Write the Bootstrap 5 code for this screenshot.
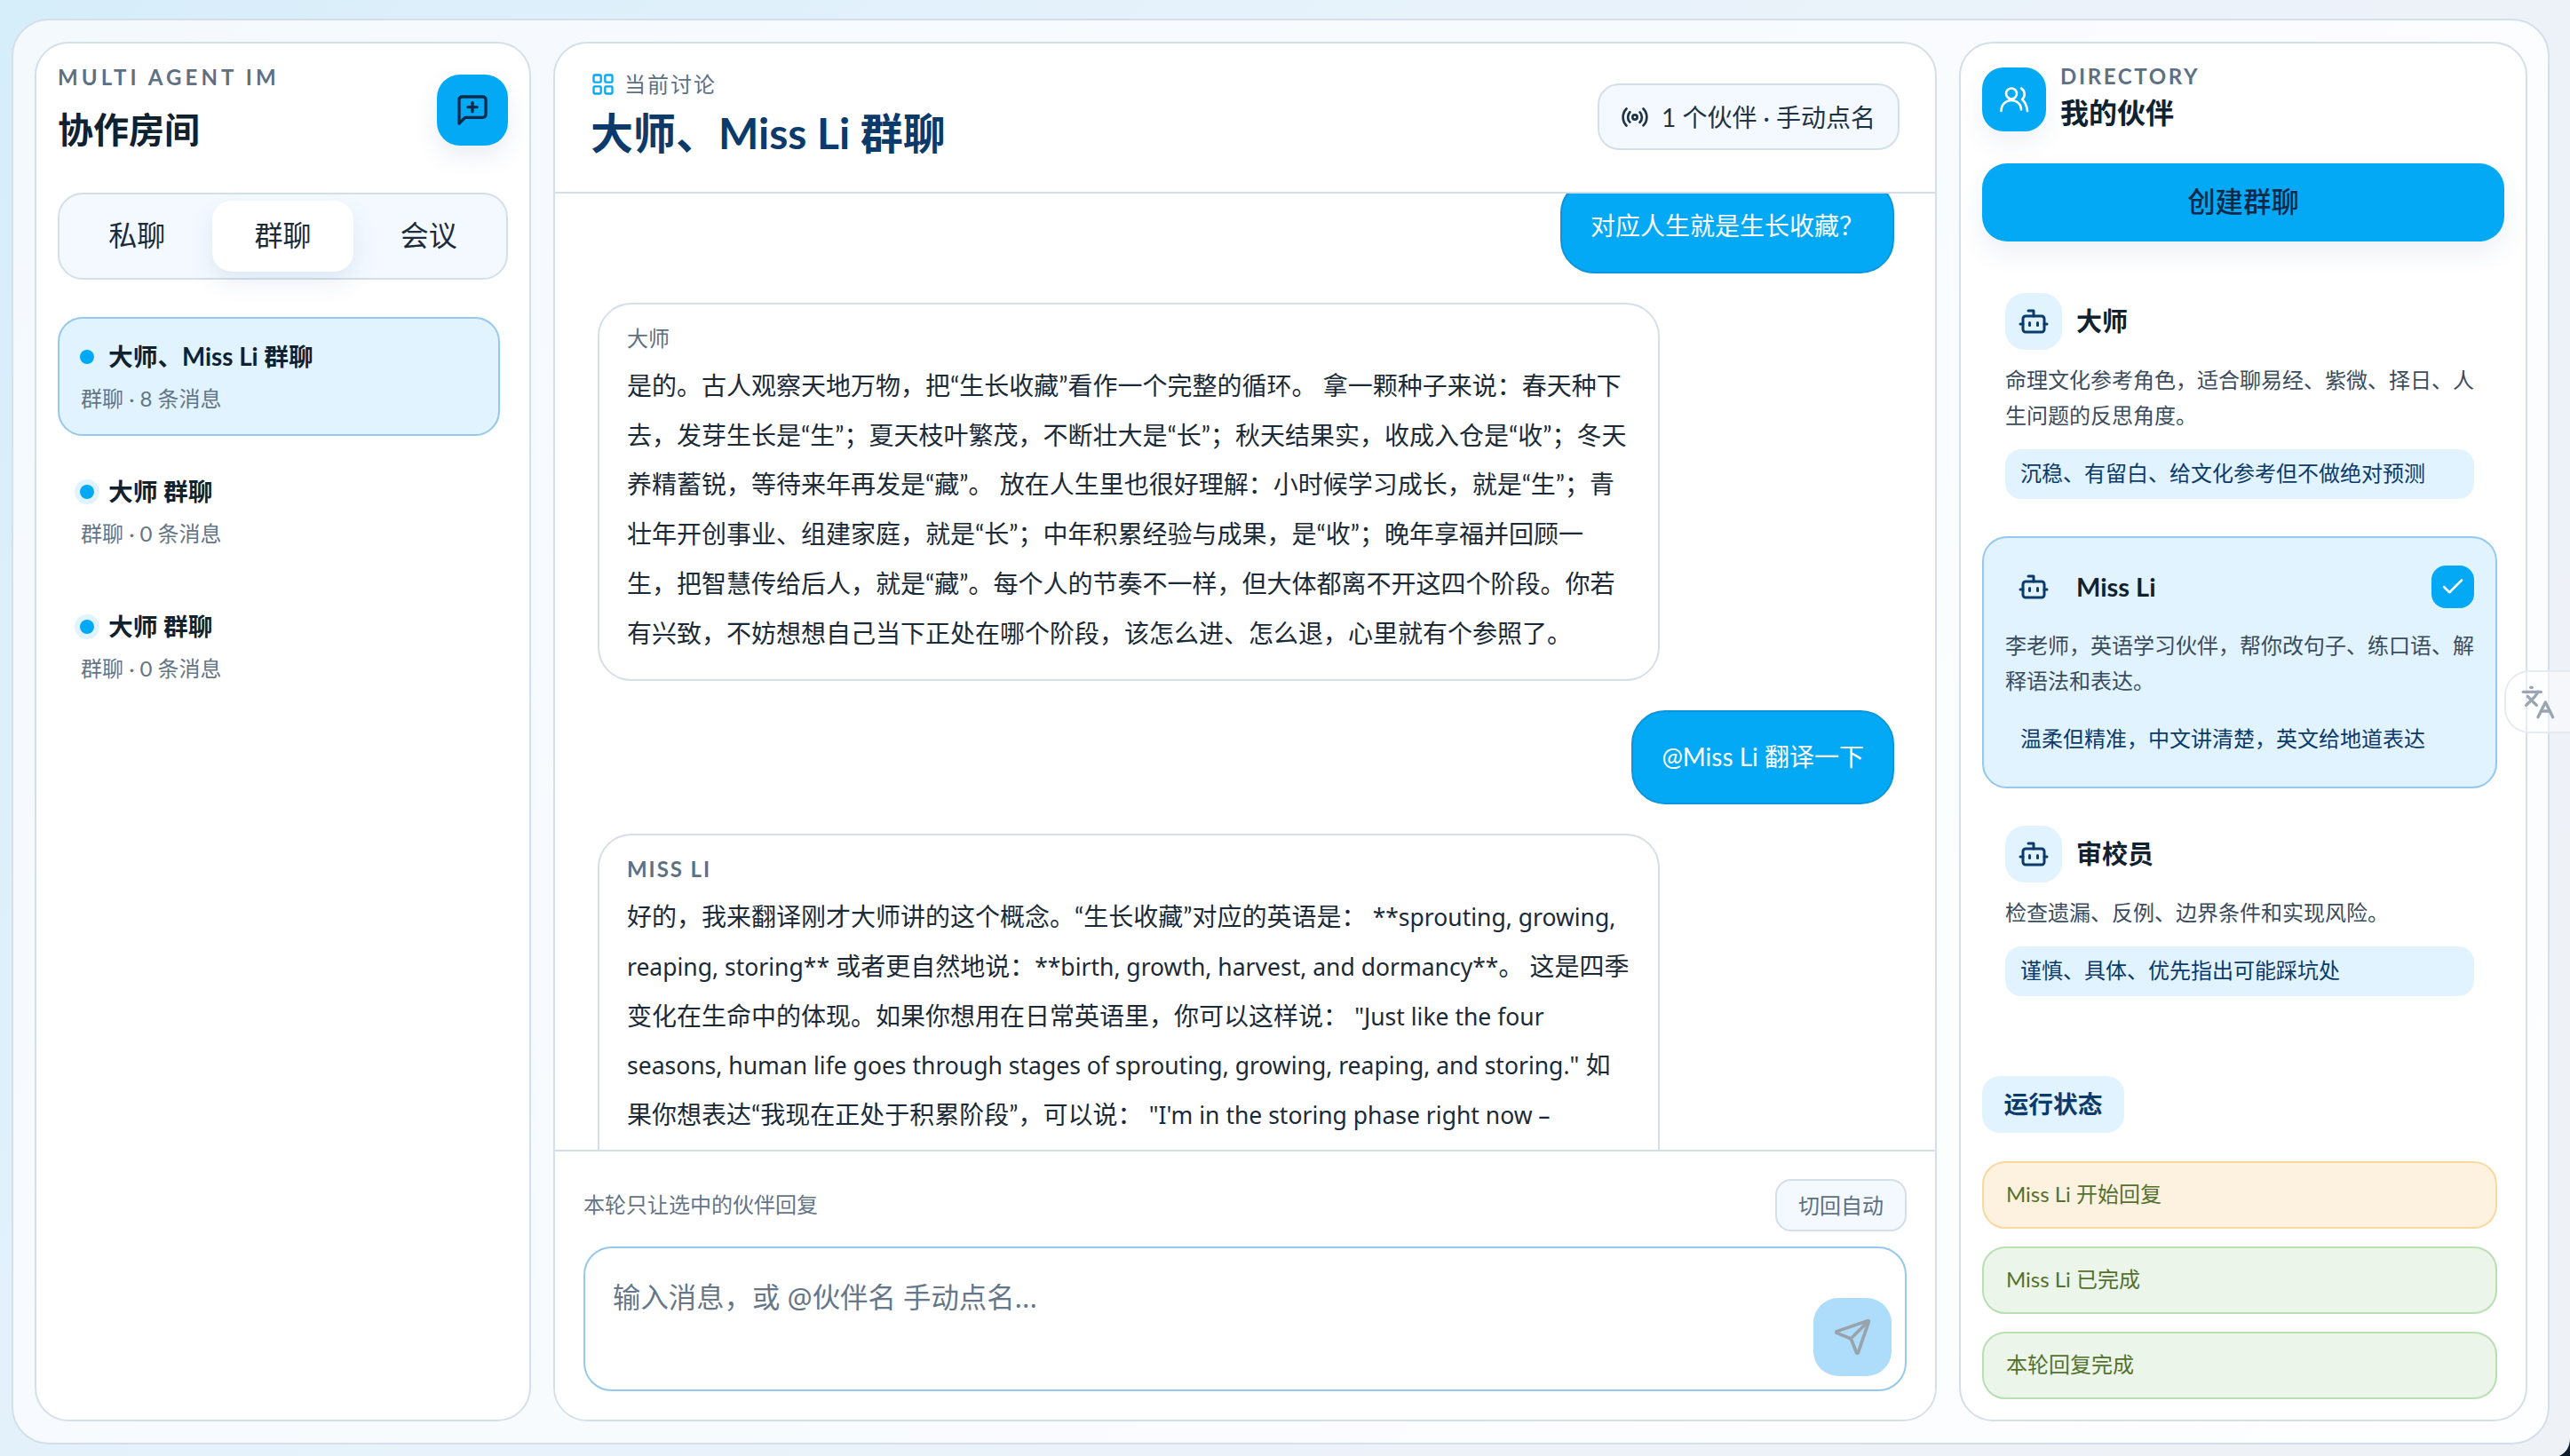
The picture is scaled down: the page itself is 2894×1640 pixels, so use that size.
<!DOCTYPE html>
<html lang="zh-CN">
<head>
  <meta charset="UTF-8">
  <title>Multi Agent IM</title>
  <link rel="stylesheet" href="https://cdn.jsdelivr.net/npm/bootstrap@5.3.0/dist/css/bootstrap.min.css">
  <style>
    html, body { height: 100%; }
    body {
      padding: 21px 23px 13px 13px;
      overflow: hidden;
      background: linear-gradient(125deg, #d6edfa 0%, #e6f2fb 35%, #edf2f8 70%, #eef2f7 100%);
      font-family: Lato, "Noto Sans CJK SC", sans-serif;
      color: #10222f;
    }
    .shell {
      height: 100%;
      padding: 24px 23px 24px 24px;
      gap: 25px;
      border: 2px solid #d5dfea;
      border-radius: 42px;
      background: linear-gradient(125deg, #f4f9fe, #fdfeff);
    }
    .pane {
      background: #fff;
      border: 2px solid #d5dfea;
      border-radius: 38px;
      overflow: hidden;
    }
    .pane-left { width: 559px; padding: 20px 24px 0 24px; }
    .pane-right { width: 640px; padding: 27px 24px 23px; }

    .eyebrow { font-size: 24px; line-height: 36px; color: #5d7084; font-weight: 700; letter-spacing: .17em; }
    .eyebrow-tight { letter-spacing: .11em; line-height: 28px; margin-top: -4px; }
    .room-title { font-size: 40px; line-height: 56px; font-weight: 700; margin-top: 13px; }
    .btn-new {
      width: 80px; height: 80px; margin-top: 15px;
      background: #03a9f4; border-radius: 26px; border: 0;
      box-shadow: 0 12px 28px rgba(40, 90, 140, .1);
    }
    .tabs {
      margin-top: 43px; height: 98px; padding: 7px 8px; gap: 6px;
      background: #f3f9ff; border: 2px solid #d5dfea; border-radius: 28px;
    }
    .tab-btn { flex: 1 1 0; font-size: 32px; color: #1b2b3a; border: 0; border-radius: 22px; padding: 0 0 2px; }
    .tab-btn.is-on { background: #fff; box-shadow: 0 12px 28px rgba(40, 90, 140, .1); }

    .rooms { margin-top: 42px; width: 498px; gap: 18px; }
    .room-item { height: 134px; padding: 22px 24px; border: 2px solid transparent; border-radius: 28px; }
    .room-item.is-on { background: #e1f3fe; border-color: #95c8ee; }
    .room-dot { width: 16px; height: 16px; margin: 0 16px 0 -1px; border-radius: 50%; background: #03a9f4; box-shadow: 0 0 0 6px #e1f3fe; }
    .room-name { font-size: 27.7px; line-height: 42px; font-weight: 700; }
    .room-sub { font-size: 24px; line-height: 36px; margin-top: 8px; color: #647588; }

    .chat-head { height: 169px; padding: 28px 40px 0 40px; border-bottom: 2px solid #d5dfea; flex: none; }
    .chat-eyebrow { font-size: 24px; line-height: 36px; letter-spacing: 2px; color: #5d7084; gap: 10px; }
    .chat-title { font-size: 48px; line-height: 66px; font-weight: 700; color: #0b3a6b; margin-top: 4px; }
    .mode-pill {
      margin-top: 17px; height: 75px; padding: 0 25px 0 24px; gap: 14px;
      font-size: 28px; color: #1f3347;
      background: #f3f9ff; border: 2px solid #d5dfea; border-radius: 24px;
    }
    .msgs { flex: 1 1 0; min-height: 0; overflow: hidden; padding: 0 46px 0 48px; }
    .msgs-inner { margin-top: -16px; gap: 33px; }
    .bubble-me {
      padding: 29px 32px 31px; font-size: 28px; line-height: 42px; color: #fff;
      background: #03a9f4; border: 2px solid #0a95dc; border-radius: 38px;
    }
    .bubble-bot {
      width: 1196px; padding: 20px 31px 24px;
      background: #fff; border: 2px solid #d5dfea; border-radius: 38px;
    }
    .bubble-bot.is-long { padding-bottom: 90px; }
    .bot-name { font-size: 24px; line-height: 36px; margin-bottom: 8px; color: #5d7084; }
    .bot-name.is-latin { letter-spacing: .08em; font-weight: 700; }
    .bot-text { font-family: Lato, "Noto Sans CJK SC", sans-serif; font-size: 28px; line-height: 55.7px; margin: 0; color: #1a2a38; }
    .en-run { font-family: "Noto Sans", sans-serif; font-size: 26.5px; line-height: 1; }

    .composer { position: relative; flex: none; padding: 31px 32px 32px; border-top: 2px solid #d5dfea; background: #fff; }
    .hint { font-size: 24px; color: #647588; padding-bottom: 2px; }
    .btn-auto {
      height: 59px; padding: 0 24px; font-size: 24px; color: #5d7084;
      background: #f3f9ff; border: 2px solid #d5dfea; border-radius: 18px;
    }
    .input-wrap { margin-top: 17px; height: 163px; }
    .input-box {
      height: 100%; resize: none; padding: 31px 31px; font-size: 31.4px;
      border: 2px solid #95c8ee; border-radius: 32px;
      font-family: "Noto Sans", "Noto Sans CJK SC", sans-serif;
    }
    .input-box::placeholder { color: #66778a; opacity: 1; }
    .btn-send {
      position: absolute; right: 17px; bottom: 17px;
      width: 88px; height: 88px; padding: 0; border: 0; border-radius: 28px;
      background: #aedcfb;
    }

    .avatar-main { width: 72px; height: 72px; background: #03a9f4; border-radius: 24px; flex: none; box-shadow: 0 12px 28px rgba(40, 90, 140, .08); }
    .dir-title { font-size: 32px; line-height: 44px; font-weight: 700; margin-top: 5px; }
    .btn-create {
      margin-top: 35px; height: 88px; font-size: 31.4px; font-weight: 500; color: #0b2a4a;
      background: #03a9f4; border: 0; border-radius: 28px; flex: none;
      box-shadow: 0 14px 30px rgba(40, 90, 140, .09);
    }
    .partners { position: relative; margin-top: 33px; background: #fff; width: 580px; gap: 17px; }
    .partner { padding: 23px 24px; border: 2px solid transparent; border-radius: 28px; }
    .partner.is-on { padding-bottom: 25px; background: #e1f3fe; border-color: #95c8ee; }
    .partner-icon { width: 64px; height: 64px; border-radius: 22px; background: #e1f3fe; flex: none; }
    .partner-name { font-size: 29px; font-weight: 700; margin-left: 16px; color: #10222f; }
    .tick { width: 48px; height: 48px; border-radius: 16px; background: #03a9f4; }
    .partner-desc { margin: 14px 0 0; font-size: 24px; line-height: 40px; color: #3b4c5e; }
    .tone { margin-top: 18px; height: 56px; padding: 0 17px 2px; font-size: 24px; color: #0b3a6b; background: #e1f3fe; border-radius: 18px; }

    .status-tag { height: 64px; width: 160px; font-size: 27.7px; font-weight: 700; color: #0b3a6b; background: #e1f3fe; border-radius: 20px; }
    .status-list { margin-top: 32px; gap: 20px; width: 580px; }
    .status-row { height: 76px; padding: 0 25px 2px; font-size: 24px; color: #55712f; border: 2px solid; border-radius: 26px; }
    .status-busy { background: #fdf1df; border-color: #f8d9a0; }
    .status-done { background: #ebf5e9; border-color: #b9dfb2; }

    .translate-tab {
      position: fixed; right: 0; top: 755px; width: 74px; height: 71px;
      background: rgba(255, 255, 255, .45);
      border: 2px solid #e6ebf1; border-right: 0;
      border-radius: 28px 0 0 28px;
    }
    .screen-corner { position: fixed; right: 0; bottom: 0; }
    svg.ico { fill: none; stroke: currentColor; stroke-linecap: round; stroke-linejoin: round; }
  </style>
</head>
<body>
<main class="shell d-flex">

  <aside class="pane pane-left d-flex flex-column flex-shrink-0">
    <div class="d-flex justify-content-between align-items-start">
      <div>
        <div class="eyebrow">MULTI AGENT IM</div>
        <div class="room-title">协作房间</div>
      </div>
      <button class="btn btn-new d-flex align-items-center justify-content-center" type="button">
        <svg class="ico" width="40" height="40" viewBox="0 0 24 24" stroke-width="2" style="color:#0b2a4a"><path d="M21 15a2 2 0 0 1-2 2H7l-4 4V5a2 2 0 0 1 2-2h14a2 2 0 0 1 2 2z"/><path d="M12 7v6"/><path d="M9 10h6"/></svg>
      </button>
    </div>

    <div class="tabs d-flex">
      <button class="btn tab-btn" type="button">私聊</button>
      <button class="btn tab-btn is-on" type="button">群聊</button>
      <button class="btn tab-btn" type="button">会议</button>
    </div>

    <div class="rooms d-flex flex-column">
      <div class="room-item is-on">
        <div class="room-name d-flex align-items-center"><span class="room-dot"></span>大师、Miss Li 群聊</div>
        <div class="room-sub">群聊 · 8 条消息</div>
      </div>
      <div class="room-item">
        <div class="room-name d-flex align-items-center"><span class="room-dot"></span>大师 群聊</div>
        <div class="room-sub">群聊 · 0 条消息</div>
      </div>
      <div class="room-item">
        <div class="room-name d-flex align-items-center"><span class="room-dot"></span>大师 群聊</div>
        <div class="room-sub">群聊 · 0 条消息</div>
      </div>
    </div>
  </aside>

  <section class="pane d-flex flex-column flex-grow-1" style="min-width:0">
    <header class="chat-head d-flex justify-content-between align-items-start">
      <div>
        <div class="chat-eyebrow d-flex align-items-center">
          <svg class="ico" width="28" height="28" viewBox="0 0 24 24" stroke-width="2" style="color:#03a9f4"><rect x="3" y="3" width="7" height="7" rx="1"/><rect x="14" y="3" width="7" height="7" rx="1"/><rect x="14" y="14" width="7" height="7" rx="1"/><rect x="3" y="14" width="7" height="7" rx="1"/></svg>
          当前讨论
        </div>
        <div class="chat-title">大师、Miss Li 群聊</div>
      </div>
      <div class="mode-pill d-flex align-items-center">
        <svg class="ico" width="32" height="32" viewBox="0 0 24 24" stroke-width="2"><path d="M4.9 19.1C1 15.2 1 8.8 4.9 4.9"/><path d="M7.8 16.2c-2.3-2.3-2.3-6.1 0-8.5"/><circle cx="12" cy="12" r="2"/><path d="M16.2 7.8c2.3 2.3 2.3 6.1 0 8.5"/><path d="M19.1 4.9C23 8.8 23 15.1 19.1 19"/></svg>
        <span>1 个伙伴 · 手动点名</span>
      </div>
    </header>

    <div class="msgs">
      <div class="msgs-inner d-flex flex-column">
        <div class="bubble-me align-self-end">对应人生就是生长收藏？</div>
        <div class="bubble-bot">
          <div class="bot-name">大师</div>
          <p class="bot-text">是的。古人观察天地万物，把“生长收藏”看作一个完整的循环。 拿一颗种子来说：春天种下去，发芽生长是“生”；夏天枝叶繁茂，不断壮大是“长”；秋天结果实，收成入仓是“收”；冬天养精蓄锐，等待来年再发是“藏”。 放在人生里也很好理解：小时候学习成长，就是“生”；青壮年开创事业、组建家庭，就是“长”；中年积累经验与成果，是“收”；晚年享福并回顾一生，把智慧传给后人，就是“藏”。每个人的节奏不一样，但大体都离不开这四个阶段。你若有兴致，不妨想想自己当下正处在哪个阶段，该怎么进、怎么退，心里就有个参照了。</p>
        </div>
        <div class="bubble-me align-self-end">@Miss Li 翻译一下</div>
        <div class="bubble-bot is-long">
          <div class="bot-name is-latin">MISS LI</div>
          <p class="bot-text">好的，我来翻译刚才大师讲的这个概念。“生长收藏”对应的英语是： <span class="en-run">**sprouting, growing,</span><br>
            <span class="en-run">reaping, storing**</span> 或者更自然地说：<span class="en-run">**birth, growth, harvest, and dormancy**</span>。 这是四季<br>
            变化在生命中的体现。如果你想用在日常英语里，你可以这样说： <span class="en-run">"Just like the four</span><br>
            <span class="en-run">seasons, human life goes through stages of sprouting, growing, reaping, and storing."</span> 如<br>
            果你想表达“我现在正处于积累阶段”，可以说： <span class="en-run">"I'm in the storing phase right now –</span></p>
        </div>
      </div>
    </div>

    <div class="composer">
      <div class="d-flex justify-content-between align-items-center">
        <span class="hint">本轮只让选中的伙伴回复</span>
        <button class="btn btn-auto d-flex align-items-center" type="button">切回自动</button>
      </div>
      <div class="input-wrap position-relative">
        <textarea class="form-control input-box" placeholder="输入消息，或 @伙伴名 手动点名..."></textarea>
        <button class="btn btn-send d-flex align-items-center justify-content-center" type="button">
          <svg class="ico" width="44" height="44" viewBox="0 0 24 24" stroke-width="2" style="color:#98a3ac"><path d="M14.536 21.686a.5.5 0 0 0 .937-.024l6.5-19a.496.496 0 0 0-.635-.635l-19 6.5a.5.5 0 0 0-.024.937l7.93 3.18a2 2 0 0 1 1.112 1.11z"/><path d="m21.854 2.147-10.94 10.939"/></svg>
        </button>
      </div>
    </div>
  </section>

  <aside class="pane pane-right d-flex flex-column flex-shrink-0">
    <div class="d-flex gap-3 align-items-start">
      <div class="avatar-main d-flex align-items-center justify-content-center">
        <svg class="ico" width="33" height="29" viewBox="0 0 33 29" stroke-width="2.6" style="color:#fff"><circle cx="13" cy="7.5" r="6"/><path d="M1.5 27c0-7 5-12 11.500-12s11 5 11 10.500"/><path d="M24 1.500c4.500 2.500 5 9.500 1 12.500 3.500 3 5.500 8 6 13"/></svg>
      </div>
      <div>
        <div class="eyebrow eyebrow-tight">DIRECTORY</div>
        <div class="dir-title">我的伙伴</div>
      </div>
    </div>

    <button class="btn btn-create" type="button">创建群聊</button>

    <div class="partners d-flex flex-column">
      <div class="partner">
        <div class="d-flex align-items-center">
          <span class="partner-icon d-flex align-items-center justify-content-center">
            <svg class="ico" width="36" height="36" viewBox="0 0 24 24" stroke-width="2" style="color:#0b3a6b"><path d="M12 8V4H8"/><rect width="16" height="12" x="4" y="8" rx="2"/><path d="M2 14h2"/><path d="M20 14h2"/><path d="M15 13v2"/><path d="M9 13v2"/></svg>
          </span>
          <span class="partner-name">大师</span>
        </div>
        <p class="partner-desc">命理文化参考角色，适合聊易经、紫微、择日、人生问题的反思角度。</p>
        <div class="tone d-flex align-items-center">沉稳、有留白、给文化参考但不做绝对预测</div>
      </div>
      <div class="partner is-on">
        <div class="d-flex align-items-center">
          <span class="partner-icon d-flex align-items-center justify-content-center">
            <svg class="ico" width="36" height="36" viewBox="0 0 24 24" stroke-width="2" style="color:#0b3a6b"><path d="M12 8V4H8"/><rect width="16" height="12" x="4" y="8" rx="2"/><path d="M2 14h2"/><path d="M20 14h2"/><path d="M15 13v2"/><path d="M9 13v2"/></svg>
          </span>
          <span class="partner-name">Miss Li</span>
          <span class="tick ms-auto d-flex align-items-center justify-content-center">
            <svg class="ico" width="30" height="30" viewBox="0 0 24 24" stroke-width="2" style="color:#fff"><path d="M20 6 9 17l-5-5"/></svg>
          </span>
        </div>
        <p class="partner-desc">李老师，英语学习伙伴，帮你改句子、练口语、解释语法和表达。</p>
        <div class="tone d-flex align-items-center">温柔但精准，中文讲清楚，英文给地道表达</div>
      </div>
      <div class="partner">
        <div class="d-flex align-items-center">
          <span class="partner-icon d-flex align-items-center justify-content-center">
            <svg class="ico" width="36" height="36" viewBox="0 0 24 24" stroke-width="2" style="color:#0b3a6b"><path d="M12 8V4H8"/><rect width="16" height="12" x="4" y="8" rx="2"/><path d="M2 14h2"/><path d="M20 14h2"/><path d="M15 13v2"/><path d="M9 13v2"/></svg>
          </span>
          <span class="partner-name">审校员</span>
        </div>
        <p class="partner-desc">检查遗漏、反例、边界条件和实现风险。</p>
        <div class="tone d-flex align-items-center">谨慎、具体、优先指出可能踩坑处</div>
      </div>
    </div>

    <div class="mt-auto">
      <div class="status-tag d-flex align-items-center justify-content-center">运行状态</div>
      <div class="status-list d-flex flex-column">
        <div class="status-row status-busy d-flex align-items-center">Miss Li 开始回复</div>
        <div class="status-row status-done d-flex align-items-center">Miss Li 已完成</div>
        <div class="status-row status-done d-flex align-items-center">本轮回复完成</div>
      </div>
    </div>
  </aside>
</main>

<div class="translate-tab d-flex align-items-center justify-content-center">
  <svg class="ico" width="40" height="40" viewBox="0 0 24 24" stroke-width="2" style="color:#9aa5b1"><path d="m5 8 6 6"/><path d="m4 14 6-6 2-3"/><path d="M2 5h12"/><path d="M7 2h1"/><path d="m22 22-5-10-5 10"/><path d="M14 18h6"/></svg>
</div>
<svg class="screen-corner" width="12" height="20" viewBox="0 0 12 20"><path d="M12 0C12 9 8 16 0 20h12z" fill="#0d1b2a"/></svg>

<script src="https://cdn.jsdelivr.net/npm/bootstrap@5.3.0/dist/js/bootstrap.bundle.min.js"></script>
</body>
</html>
